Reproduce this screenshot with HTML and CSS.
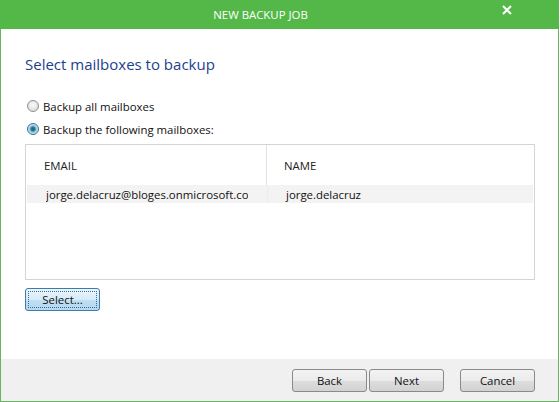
FILE: index.html
```html
<!DOCTYPE html>
<html>
<head>
<meta charset="utf-8">
<link rel="stylesheet" href="styles.css">
</head>
<body>
<div class="window">
  <div class="titlebar">
    <span class="title">NEW BACKUP JOB</span>
    <svg class="close" width="10" height="10" viewBox="0 0 10 10"><path d="M1 1 L9 9 M9 1 L1 9" stroke="#fff" stroke-width="2"/></svg>
  </div>
  <div class="content">
    <h1 class="heading">Select mailboxes to backup</h1>
    <div class="options">
      <label class="opt"><span class="radio"></span>Backup all mailboxes</label>
      <label class="opt"><span class="radio checked"></span>Backup the following mailboxes:</label>
    </div>
    <div class="table">
      <div class="thead">
        <div class="th c1">EMAIL</div>
        <div class="th c2">NAME</div>
      </div>
      <div class="trow">
        <div class="td c1"><span class="clip">jorge.delacruz@bloges.onmicrosoft.com</span></div>
        <div class="td c2">jorge.delacruz</div>
      </div>
    </div>
    <button class="select"><span class="focus">Select...</span></button>
  </div>
  <div class="footer">
    <button class="btn">Back</button>
    <button class="btn">Next</button>
    <button class="btn cancel">Cancel</button>
  </div>
</div>
</body>
</html>
```
FILE: styles.css
```css
html, body { margin: 0; padding: 0; background: #fff; }
body { font-family: "Open Sans", "Noto Sans", sans-serif; font-size: 11.4px; color: #111; }
.window {
  width: 557px; height: 401px;
  border: 1px solid #66b55f; border-top: none;
  display: flex; flex-direction: column;
  background: #fff;
}
.titlebar {
  height: 29px; margin: 0 -1px; background: #53b848;
  display: flex; align-items: center; justify-content: center;
  padding-right: 38px;
  position: relative; color: #fff;
}
.title { font-size: 11.4px; }
.close { position: absolute; right: 47px; top: 5px; }
.content { flex: 1; padding: 24px 0 0 24px; }
.heading { margin: 0; font-weight: normal; font-size: 15px; color: #1c3f8c; line-height: 22px; }
.options { margin-top: 22px; display: flex; flex-direction: column; gap: 5px; }
.opt { display: flex; align-items: center; height: 18px; color: #111; }
.radio {
  width: 10px; height: 10px; border-radius: 50%;
  border: 1px solid #8f8f8f; margin: 0 4px 0 2px;
  background: radial-gradient(circle at 50% 40%, #fafafa 0%, #dcdcdc 80%);
  box-sizing: content-box;
}
.radio.checked {
  border-color: #3a6e8f;
  background: radial-gradient(circle, #1d5a73 0%, #2f7fa0 30%, #8fc7de 45%, #e6f3f9 80%);
}
.table {
  margin-top: 6px; width: 508px; height: 134px;
  border: 1px solid #d4d4d4;
}
.thead { display: flex; height: 40px; }
.th { display: flex; align-items: center; color: #222; }
.c1 { width: 222px; padding-left: 18px; border-right: 1px solid #e2e2e2; }
.c2 { padding-left: 17px; flex: 1; }
.trow { display: flex; height: 18px; background: #f3f3f3; margin: 0 1px; }
.trow .c1 { width: 221px; padding-left: 19px; white-space: nowrap; border-right-color: #ececec; }
.clip { display: block; width: 202px; overflow: hidden; }
.trow .c2 { padding-left: 18px; }
.td { display: flex; align-items: center; color: #111; }
.select {
  margin-top: 8px; width: 75px; height: 23px; padding: 2px;
  border: 1px solid #3d7bab; border-radius: 3px;
  background: linear-gradient(#eaf5fc, #d6ebf8 50%, #c0dff2 51%, #b3d7ee);
  font-family: inherit; font-size: 11.4px; color: #111;
}
.focus { display: flex; height: 100%; align-items: center; justify-content: center; border: 1px dotted #3a6d8f; box-sizing: border-box; }
.footer {
  height: 42px; background: #f0f0f0;
  display: flex; align-items: center; padding-left: 291px; gap: 2px;
}
.btn {
  width: 75px; height: 23px;
  border: 1px solid #8a8a8a; border-radius: 3px;
  background: linear-gradient(#f3f3f3, #ebebeb 50%, #dddddd 51%, #d2d2d2);
  font-family: inherit; font-size: 11.4px; color: #111; padding: 0;
}
.btn.cancel { margin-left: 14px; }
```
